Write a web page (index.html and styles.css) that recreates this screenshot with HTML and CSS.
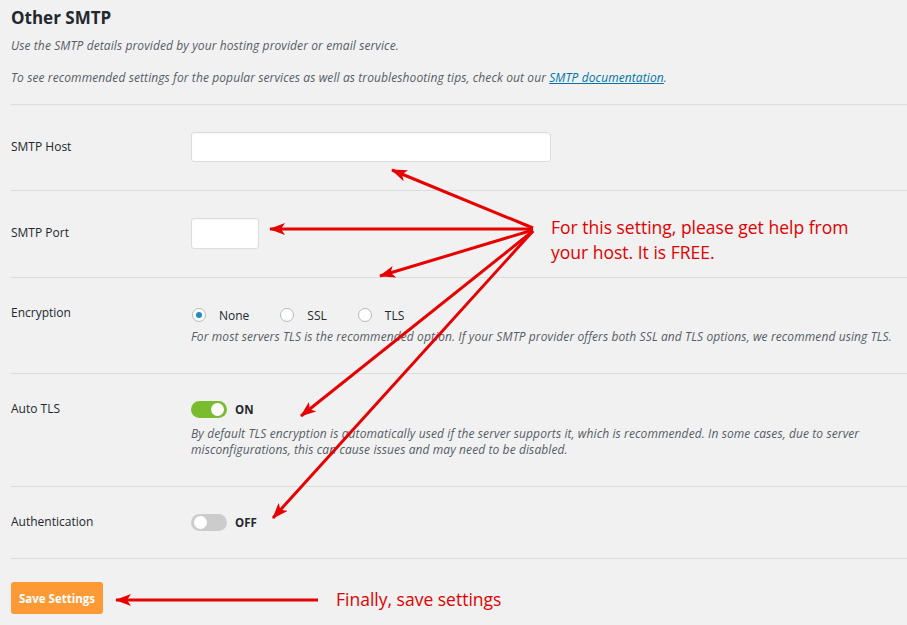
FILE: index.html
```html
<!DOCTYPE html>
<html lang="en">

<head>
    <meta charset="UTF-8">
    <meta name="viewport" content="width=device-width, initial-scale=1.0">
    <title>Other SMTP</title>
    <link rel="stylesheet" href="styles.css">
</head>

<body>
    <div class="settings">
        <div class="section-head">
            <h1>Other SMTP</h1>
            <p class="desc">Use the SMTP details provided by your hosting provider or email service.</p>
            <p class="desc">To see recommended settings for the popular services as well as troubleshooting tips, check out our <a href="#">SMTP documentation</a>.</p>
        </div>

        <!-- SMTP Host -->
        <div class="row">
            <div class="label">SMTP Host</div>
            <div class="field">
                <input type="text" class="input-box host">
            </div>
        </div>

        <!-- SMTP Port -->
        <div class="row">
            <div class="label">SMTP Port</div>
            <div class="field">
                <input type="text" class="input-box port">
            </div>
        </div>

        <!-- Encryption -->
        <div class="row">
            <div class="label label-small">Encryption</div>
            <div class="field">
                <div class="radio-group">
                    <label class="radio"><span class="dot checked"></span>None</label>
                    <label class="radio"><span class="dot"></span>SSL</label>
                    <label class="radio"><span class="dot"></span>TLS</label>
                </div>
                <p class="desc field-desc">For most servers TLS is the recommended option. If your SMTP provider offers both SSL and TLS options, we recommend using TLS.</p>
            </div>
        </div>

        <!-- Auto TLS -->
        <div class="row">
            <div class="label label-small">Auto TLS</div>
            <div class="field">
                <div class="toggle-line">
                    <span class="toggle on"></span>
                    <span class="toggle-text">ON</span>
                </div>
                <p class="desc field-desc tls-desc">By default TLS encryption is automatically used if the server supports it, which is recommended. In some cases, due to server misconfigurations, this can cause issues and may need to be disabled.</p>
            </div>
        </div>

        <!-- Authentication -->
        <div class="row">
            <div class="label label-small">Authentication</div>
            <div class="field">
                <div class="toggle-line">
                    <span class="toggle"></span>
                    <span class="toggle-text">OFF</span>
                </div>
            </div>
        </div>

        <div class="actions">
            <button class="save-button">Save Settings</button>
        </div>
    </div>

    <!-- annotations drawn over the page -->
    <div class="note note-help">For this setting, please get help from<br>your host. It is FREE.</div>
    <div class="note note-save">Finally, save settings</div>

    <svg class="arrows" width="907" height="625" viewBox="0 0 907 625">
        <defs>
            <marker id="head" markerUnits="userSpaceOnUse" markerWidth="16" markerHeight="12" refX="15" refY="6" orient="auto">
                <path d="M0 0 L16 6 L0 12 L4 6 Z" fill="#e60000"/>
            </marker>
        </defs>
        <g stroke="#e60000" stroke-width="3" fill="none" marker-end="url(#head)">
            <line x1="533" y1="228" x2="392" y2="170"/>
            <line x1="533" y1="229" x2="270" y2="229"/>
            <line x1="533" y1="230" x2="380" y2="276"/>
            <line x1="533" y1="231" x2="301" y2="416"/>
            <line x1="533" y1="231" x2="273" y2="518"/>
            <line x1="318" y1="600" x2="116" y2="600"/>
        </g>
    </svg>
</body>

</html>
```

FILE: styles.css
```css
body {
    margin: 0;
    font-family: "Open Sans", "Noto Sans", sans-serif;
    font-size: 12px;
    color: #23282d;
    background-color: #f1f1f1;
    width: 907px;
    height: 625px;
    overflow: hidden;
    position: relative;
}

.settings {
    padding: 6px 0 0 11px;
}

h1 {
    margin: 0;
    font-size: 17px;
    line-height: 24px;
    font-weight: 700;
}

.desc {
    margin: 0;
    font-style: italic;
    color: #555d66;
    line-height: 18px;
    letter-spacing: 0.1px;
}

.section-head {
    padding-bottom: 17px;
    border-bottom: 1px solid #dcdcde;
}

.section-head .desc {
    margin-top: 7px;
}

.section-head .desc + .desc {
    margin-top: 14px;
}

.desc a {
    color: #0073aa;
}

.row {
    display: flex;
    padding: 27px 0 28px;
    border-bottom: 1px solid #dcdcde;
}

.label {
    width: 180px;
    flex: none;
    line-height: 30px;
    font-weight: 500;
}

.label-small {
    line-height: 16px;
}

.field {
    flex: 1;
}

.input-box {
    display: block;
    height: 30px;
    box-sizing: border-box;
    border: 1px solid #dcdcdc;
    border-radius: 3px;
    background-color: white;
    box-shadow: inset 0 1px 2px rgba(0, 0, 0, 0.04);
}

.host {
    width: 360px;
}

.port {
    width: 68px;
    height: 31px;
}

.radio-group {
    display: flex;
    height: 20px;
    align-items: center;
}

.radio {
    display: flex;
    align-items: center;
    gap: 13px;
    margin-right: 30px;
}

.dot {
    width: 14px;
    height: 14px;
    box-sizing: border-box;
    border: 1px solid #b4b9be;
    border-radius: 50%;
    background-color: white;
    display: flex;
    align-items: center;
    justify-content: center;
    margin-left: 1px;
}

.dot.checked::after {
    content: "";
    width: 6px;
    height: 6px;
    border-radius: 50%;
    background-color: #1e8cbe;
}

.field-desc {
    margin-top: 4px;
    line-height: 16px;
}

.tls-desc {
    margin-top: 9px;
    max-width: 700px;
}

.toggle-line {
    display: flex;
    align-items: center;
    gap: 8px;
    height: 16px;
}

.toggle {
    width: 36px;
    height: 17px;
    border-radius: 9px;
    background-color: #cccccc;
    position: relative;
}

.toggle::after {
    content: "";
    position: absolute;
    top: 2px;
    left: 3px;
    width: 13px;
    height: 13px;
    border-radius: 50%;
    background-color: white;
}

.toggle.on {
    background-color: #79bd2f;
}

.toggle.on::after {
    left: auto;
    right: 3px;
}

.toggle-text {
    font-weight: 700;
    font-size: 11.5px;
}

.actions {
    padding-top: 23px;
}

.save-button {
    background-color: #fd9a35;
    color: white;
    font-family: inherit;
    font-weight: 700;
    font-size: 11.5px;
    height: 32px;
    width: 92px;
    padding: 0;
    border: none;
    border-radius: 3px;
    cursor: pointer;
}

.note {
    position: absolute;
    color: #e00000;
    font-size: 17.5px;
    line-height: 25px;
}

.note-help {
    left: 551px;
    top: 215px;
}

.note-save {
    left: 336px;
    top: 587px;
}

.arrows {
    position: absolute;
    left: 0;
    top: 0;
    pointer-events: none;
}
```
